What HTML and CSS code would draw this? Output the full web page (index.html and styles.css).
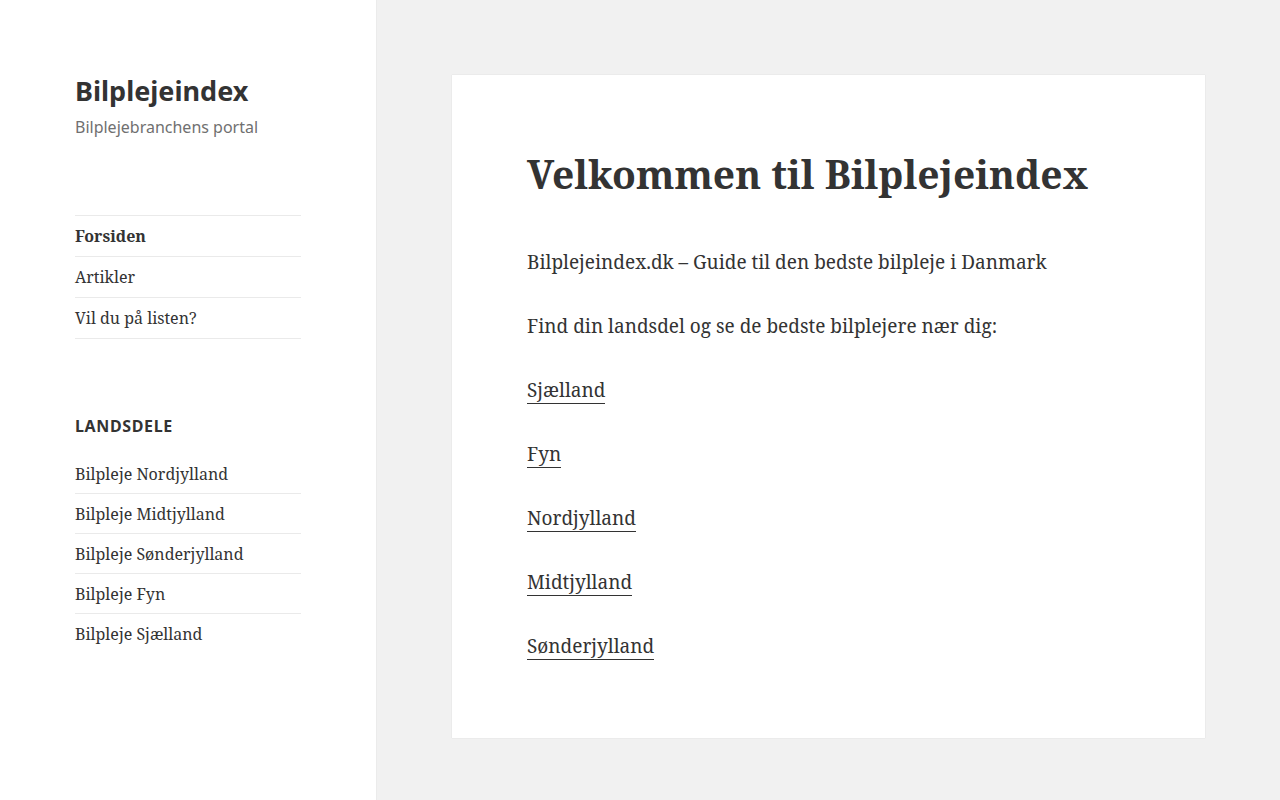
FILE: index.html
```html
<!DOCTYPE html>
<html lang="da">
<head>
<meta charset="utf-8">
<title>Bilplejeindex</title>
<link rel="stylesheet" href="styles.css">
</head>
<body>
<div class="page">
  <aside class="sidebar">
    <header class="site-header">
      <p class="site-title">Bilplejeindex</p>
      <p class="site-description">Bilplejebranchens portal</p>
    </header>
    <nav class="main-nav">
      <ul>
        <li class="current"><a href="#">Forsiden</a></li>
        <li><a href="#">Artikler</a></li>
        <li><a href="#">Vil du på listen?</a></li>
      </ul>
    </nav>
    <section class="widget">
      <h2 class="widget-title">Landsdele</h2>
      <ul class="widget-list">
        <li><a href="#">Bilpleje Nordjylland</a></li>
        <li><a href="#">Bilpleje Midtjylland</a></li>
        <li><a href="#">Bilpleje Sønderjylland</a></li>
        <li><a href="#">Bilpleje Fyn</a></li>
        <li><a href="#">Bilpleje Sjælland</a></li>
      </ul>
    </section>
  </aside>
  <main class="content">
    <article class="card">
      <h1 class="entry-title">Velkommen til Bilplejeindex</h1>
      <div class="entry-content">
        <p>Bilplejeindex.dk – Guide til den bedste bilpleje i Danmark</p>
        <p>Find din landsdel og se de bedste bilplejere nær dig:</p>
        <p><a href="#">Sjælland</a></p>
        <p><a href="#">Fyn</a></p>
        <p><a href="#">Nordjylland</a></p>
        <p><a href="#">Midtjylland</a></p>
        <p><a href="#">Sønderjylland</a></p>
      </div>
    </article>
  </main>
</div>
</body>
</html>
```
FILE: styles.css
```css
html, body {
  margin: 0;
  padding: 0;
}
body {
  background: #f1f1f1;
  color: #333;
  font-family: "Noto Serif", "Liberation Serif", serif;
}
a {
  color: #333;
  text-decoration: none;
}
ul {
  list-style: none;
  margin: 0;
  padding: 0;
}
.page {
  display: flex;
  height: 100vh;
  align-items: stretch;
  overflow: hidden;
}
.sidebar {
  width: 226px;
  flex: 0 0 226px;
  padding: 0 75px;
  background: #fff;
  box-shadow: 0 0 1px rgba(0, 0, 0, 0.15);
  position: relative;
  z-index: 1;
}
.site-header {
  padding-top: 73px;
  margin-bottom: 76px;
}
.site-title {
  font-family: "Noto Sans", sans-serif;
  font-weight: 700;
  font-size: 27px;
  line-height: 36px;
  margin: 0;
}
.site-description {
  font-family: "Noto Sans", sans-serif;
  font-size: 16px;
  line-height: 24px;
  color: #707070;
  margin: 6px 0 0;
}
.main-nav ul {
  border-top: 1px solid #eaeaea;
}
.main-nav li {
  border-bottom: 1px solid #eaeaea;
}
.main-nav a {
  display: block;
  padding: 8px 0;
  font-size: 16px;
  line-height: 24px;
}
.main-nav .current a {
  font-weight: 700;
}
.widget {
  margin-top: 75px;
}
.widget-title {
  font-family: "Noto Sans", sans-serif;
  font-weight: 700;
  font-size: 16px;
  line-height: 24px;
  letter-spacing: 0.04em;
  text-transform: uppercase;
  margin: 0 0 16px;
}
.widget-list li {
  padding: 8px 0 7px;
  font-size: 16px;
  line-height: 24px;
}
.widget-list li + li {
  border-top: 1px solid #eaeaea;
}
.content {
  flex: 1;
  padding: 75px 75px 0 76px;
}
.card {
  background: #fff;
  box-shadow: 0 0 1px rgba(0, 0, 0, 0.15);
  padding: 76px 75px 76px;
}
.entry-title {
  font-size: 39px;
  line-height: 45px;
  font-weight: 700;
  margin: 0 0 50px;
}
.entry-content p {
  font-size: 19px;
  line-height: 32px;
  margin: 0 0 32px;
}
.entry-content p:last-child {
  margin-bottom: 0;
}
.entry-content a {
  border-bottom: 1px solid #333;
}
```
